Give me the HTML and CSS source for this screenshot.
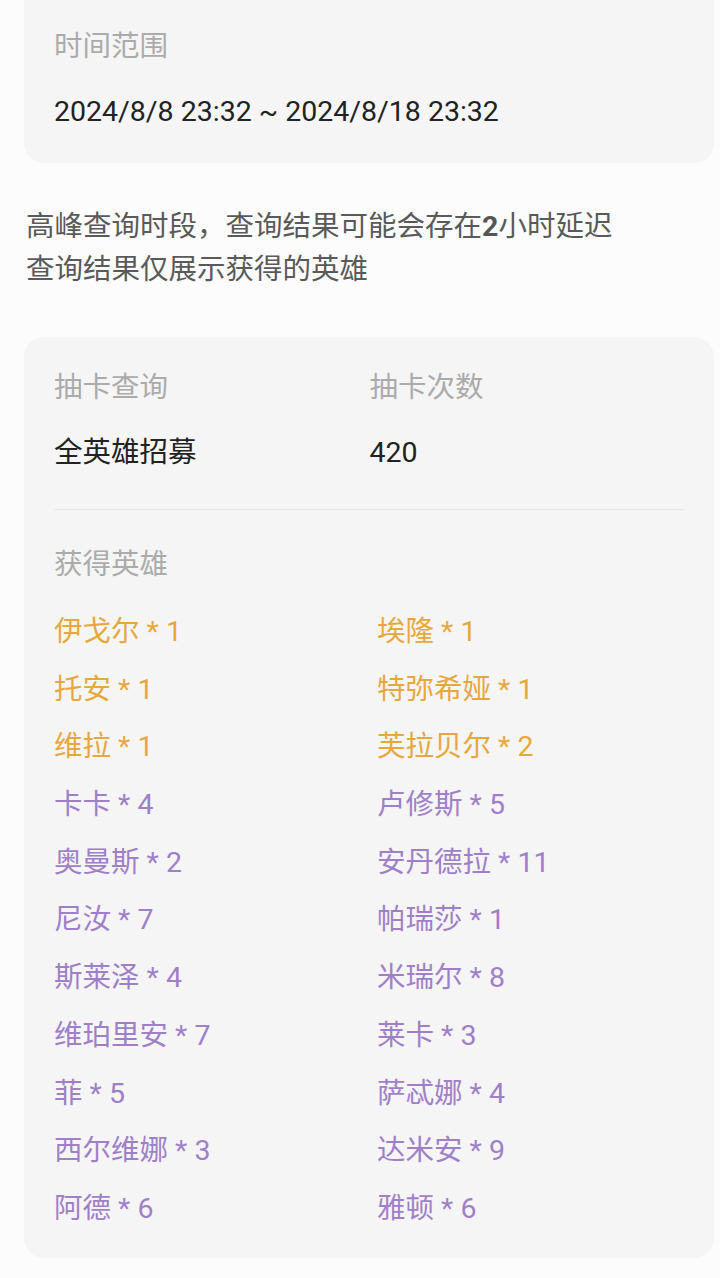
FILE: index.html
```html
<!DOCTYPE html>
<html lang="zh-CN">
<head>
<meta charset="utf-8">
<link rel="stylesheet" href="styles.css">
</head>
<body>
<div class="page">
  <section class="card card-top">
    <div class="label">时间范围</div>
    <div class="value">2024/8/8 23:32 ~ 2024/8/18 23:32</div>
  </section>

  <div class="notes">
    <p>高峰查询时段，查询结果可能会存在<span class="num">2</span>小时延迟</p>
    <p>查询结果仅展示获得的英雄</p>
  </div>

  <section class="card card-main">
    <div class="info-grid">
      <div class="col">
        <div class="label">抽卡查询</div>
        <div class="value">全英雄招募</div>
      </div>
      <div class="col">
        <div class="label">抽卡次数</div>
        <div class="value">420</div>
      </div>
    </div>
    <div class="divider"></div>
    <div class="label">获得英雄</div>
    <div class="heroes">
      <div class="hero gold">伊戈尔 * 1</div>
      <div class="hero gold">埃隆 * 1</div>
      <div class="hero gold">托安 * 1</div>
      <div class="hero gold">特弥希娅 * 1</div>
      <div class="hero gold">维拉 * 1</div>
      <div class="hero gold">芙拉贝尔 * 2</div>
      <div class="hero purple">卡卡 * 4</div>
      <div class="hero purple">卢修斯 * 5</div>
      <div class="hero purple">奥曼斯 * 2</div>
      <div class="hero purple">安丹德拉 * 11</div>
      <div class="hero purple">尼汝 * 7</div>
      <div class="hero purple">帕瑞莎 * 1</div>
      <div class="hero purple">斯莱泽 * 4</div>
      <div class="hero purple">米瑞尔 * 8</div>
      <div class="hero purple">维珀里安 * 7</div>
      <div class="hero purple">莱卡 * 3</div>
      <div class="hero purple">菲 * 5</div>
      <div class="hero purple">萨忒娜 * 4</div>
      <div class="hero purple">西尔维娜 * 3</div>
      <div class="hero purple">达米安 * 9</div>
      <div class="hero purple">阿德 * 6</div>
      <div class="hero purple">雅顿 * 6</div>
    </div>
  </section>
</div>
</body>
</html>
```

FILE: styles.css
```css
html, body {
  margin: 0;
  padding: 0;
  background: #fcfcfc;
}

body {
  font-family: Roboto, "Noto Sans CJK SC", sans-serif;
  font-size: 28.5px;
  color: #222222;
  overflow: hidden;
  height: 1278px;
}

.page {
  padding: 0 6px 0 24px;
}

.card {
  background: #f5f5f5;
  border-radius: 20px;
  padding-left: 30px;
  padding-right: 29px;
}

.card-top {
  margin-top: -30px;
  padding-top: 57px;
  padding-bottom: 31px;
}

.label {
  color: #ababab;
  line-height: 40px;
}

.value {
  color: #222222;
  line-height: 40px;
  margin-top: 25px;
}

.notes {
  margin: 41.5px 0 46.5px 2px;
  color: #5a5a5a;
}

.notes p {
  margin: 0;
  line-height: 43px;
}

.num {
  font-weight: 700;
  color: #555555;
}

.card-main {
  padding-top: 31px;
  padding-bottom: 29px;
}

.info-grid {
  display: grid;
  grid-template-columns: 1fr 1fr;
}

.divider {
  height: 1px;
  background: #e8e8e8;
  margin: 36px 0 35px;
}

.heroes {
  display: grid;
  grid-template-columns: 323px 1fr;
  row-gap: 17.7px;
  margin-top: 27px;
}

.hero {
  line-height: 40px;
  white-space: nowrap;
}

.gold {
  color: #e8a73c;
}

.purple {
  color: #a07fc9;
}
```
